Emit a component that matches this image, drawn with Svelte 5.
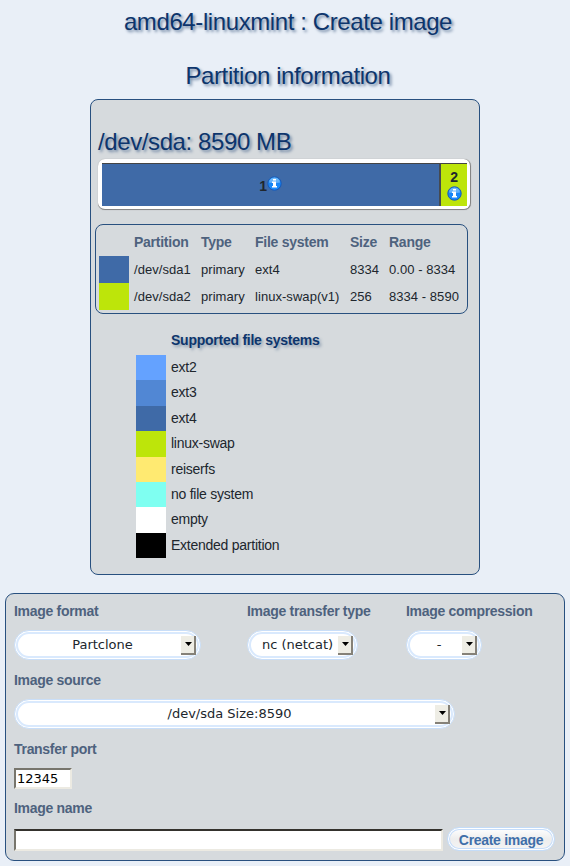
<script>
  const partitions = [
    { color: '#3f6aa7', name: '/dev/sda1', type: 'primary', fs: 'ext4', size: '8334', range: '0.00 - 8334' },
    { color: '#bde50a', name: '/dev/sda2', type: 'primary', fs: 'linux-swap(v1)', size: '256', range: '8334 - 8590' }
  ];
  const systems = [
    ['ext2', '#64a2ff'],
    ['ext3', '#5187d4'],
    ['ext4', '#3f6aa7'],
    ['linux-swap', '#bde50a'],
    ['reiserfs', '#ffea71'],
    ['no file system', '#7ffff1'],
    ['empty', '#ffffff'],
    ['Extended partition', '#000000']
  ];
  let port = $state('12345');
  let imageName = $state('');
</script>

{#snippet info()}
  <svg class="info" width="15" height="15" viewBox="0 0 15 15">
    <defs>
      <linearGradient id="ball" x1="0" y1="0" x2="0" y2="1">
        <stop offset="0" stop-color="#5bb4fa" />
        <stop offset="0.5" stop-color="#1785f5" />
        <stop offset="1" stop-color="#1b8cff" />
      </linearGradient>
    </defs>
    <circle cx="7.5" cy="7.5" r="6.7" fill="url(#ball)" stroke="#1558b8" stroke-width="1" />
    <path d="M2 6.500a5.600 5.600 0 0 1 11 0q-5.500 1.500-11 0z" fill="#b5dcff" opacity="0.4" />
    <path d="M6 3h3v1.500h-3zM5 5.500h4v4.500h1v1.500h-5v-1.500h1v-3h-1z" fill="#fff" />
  </svg>
{/snippet}

{#snippet dropdown(text, width)}
  <div class="select" style="width:{width}px">
    <span>{text}</span>
    <i class="arrow"><svg width="7" height="4" viewBox="0 0 7 4"><path d="M0 0h7L3.500 4z" /></svg></i>
  </div>
{/snippet}

<main>
  <h1>amd64-linuxmint : Create image</h1>
  <h1 class="second">Partition information</h1>

  <section class="disk">
    <h2>/dev/sda: 8590 MB</h2>
    <div class="bar">
      <div class="part first"><b>1</b>{@render info()}</div>
      <div class="part swap"><b>2</b>{@render info()}</div>
    </div>

    <div class="table">
      <div class="row head">
        <span></span><span>Partition</span><span>Type</span><span>File system</span><span>Size</span><span>Range</span>
      </div>
      {#each partitions as p}
        <div class="row">
          <i style="background:{p.color}"></i><span>{p.name}</span><span>{p.type}</span><span>{p.fs}</span><span>{p.size}</span><span>{p.range}</span>
        </div>
      {/each}
    </div>

    <div class="legend">
      <h3>Supported file systems</h3>
      {#each systems as [name, color]}
        <div class="system"><i style="background:{color}"></i><span>{name}</span></div>
      {/each}
    </div>
  </section>

  <section class="form">
    <div class="options">
      <div class="c1"><div class="label">Image format</div>{@render dropdown('Partclone', 187)}</div>
      <div class="c2"><div class="label">Image transfer type</div>{@render dropdown('nc (netcat)', 111)}</div>
      <div><div class="label">Image compression</div>{@render dropdown('-', 76)}</div>
    </div>
    <div class="label">Image source</div>
    {@render dropdown('/dev/sda Size:8590', 441)}
    <label class="label" for="port">Transfer port</label>
    <input id="port" class="port" bind:value={port} />
    <label class="label" for="name">Image name</label>
    <div class="submit">
      <input id="name" class="name" bind:value={imageName} />
      <button>Create image</button>
    </div>
  </section>
</main>

<style>
  :global(body) { background: #e9eff7; }
  main {
    box-sizing: border-box;
    height: 866px;
    overflow: hidden;
    font: 14px "Liberation Sans", Arial, sans-serif;
    letter-spacing: -0.25px;
    color: #20262d;
    background: #e9eff7;
  }
  main * { box-sizing: border-box; }
  h1, h2 {
    margin: 0;
    font-size: 24px;
    font-weight: normal;
    line-height: 28px;
    letter-spacing: -0.4px;
    color: #0d356c;
    text-shadow: 2px 2px 3px #7187a4;
    white-space: nowrap;
  }
  h1 { padding: 8px 0 0 6px; text-align: center; }
  .second { padding-top: 26px; }
  .disk {
    width: 390px;
    height: 476px;
    margin: 9px 0 0 90px;
    padding: 28px 0 0 4px;
    border: 1px solid #28507f;
    border-radius: 8px;
    background: #d6dadd;
  }
  h2 { padding-left: 3px; }
  .bar {
    display: flex;
    width: 373px;
    height: 51px;
    margin: 3px 0 0 3px;
    padding: 4px 3px 3px 4px;
    border-radius: 7px;
    border: solid #858585;
    border-width: 0 1px 1px 0;
    background: #fff;
    box-shadow: 0 0 1px #999;
  }
  .part { height: 43px; border-top: 1px solid #444; }
  .first {
    display: flex;
    flex: 1;
    justify-content: center;
    padding-top: 12px;
    border-right: 2px solid #454a52;
    background: #3f6aa7;
  }
  b { font: bold 14px/21px "Liberation Sans", Arial, sans-serif; }
  .info { display: block; }
  .swap {
    display: flex;
    width: 26px;
    flex-direction: column;
    align-items: center;
    padding-top: 4px;
    background: #bde50a;
  }
  .swap b { line-height: 18px; }
  .table {
    width: 373px;
    height: 90px;
    margin-top: 14px;
    padding: 4px 0 0 3px;
    border: 1px solid #28507f;
    border-radius: 8px;
  }
  .row {
    display: grid;
    grid-template-columns: 35px 67px 54px 95px 39px 75px;
    height: 27px;
    line-height: 27px;
    font-size: 13px;
    letter-spacing: 0.05px;
    white-space: nowrap;
  }
  .head { font-size: 14px; font-weight: bold; letter-spacing: -0.25px; color: #4e627e; }
  .row i { width: 30px; }
  .legend { margin: 14px 0 0 41px; }
  h3 {
    height: 27px;
    margin: 0;
    padding-left: 35px;
    font-size: 14px;
    line-height: 25px;
    color: #0d356c;
    text-shadow: 2px 2px 3px #8c9caf;
  }
  .system { display: flex; gap: 5px; height: 25.375px; line-height: 25px; }
  .system i { width: 30px; }
  .form {
    width: 560px;
    height: 268px;
    margin: 18px 0 0 5px;
    padding: 7px 8px 0;
    border: 1px solid #28507f;
    border-radius: 9px;
    background: #d6dadd;
  }
  .options { display: flex; }
  .c1 { width: 233px; }
  .c2 { width: 159px; }
  .label {
    display: block;
    height: 29px;
    line-height: 20px;
    letter-spacing: -0.3px;
    font-weight: bold;
    color: #4e627e;
    white-space: nowrap;
  }
  .select {
    display: flex;
    align-items: center;
    height: 30px;
    margin-bottom: 10px;
    padding: 0 4px 0 9px;
    border: 1px solid #c9def8;
    border-radius: 15px;
    background: #fff;
    box-shadow: inset 0 0 0 1px #fff, inset 0 0 0 3px #d9e9fd;
    font: 13px/28px "DejaVu Sans", sans-serif;
    letter-spacing: 0;
  }
  .select span { flex: 1; height: 29px; text-align: center; white-space: nowrap; }
  .arrow {
    display: flex;
    width: 15px;
    height: 19px;
    align-items: center;
    justify-content: center;
    padding-left: 1px;
    border: solid #858178;
    border-width: 0 2px 2px 0;
    background: #eeede5;
  }
  .arrow svg { display: block; }
  input {
    display: block;
    height: 21px;
    margin: 0;
    padding: 0 1px;
    border: 2px solid;
    border-color: #77756c #eceae2 #eceae2 #77756c;
    border-radius: 0;
    outline: 0;
    background: #fff;
    color: #000;
    font: 13px "DejaVu Sans", sans-serif;
  }
  .port { width: 58px; margin-bottom: 9px; }
  .name { width: 429px; height: 22px; margin-top: 2px; border-color: #34322d #eceae2 #eceae2 #77756c; }
  .submit { display: flex; gap: 4px; }
  button {
    width: 108px;
    height: 24px;
    padding: 0;
    border: 1px solid #c4dcf8;
    border-radius: 12px;
    background: linear-gradient(#fff, #eee 50%, #f4f4f4);
    box-shadow: inset 0 0 0 1px #fff, inset 0 0 0 2px #c6ddfa;
    color: #3f6fa9;
    font: bold 14px/24px "Liberation Sans", Arial, sans-serif;
    letter-spacing: -0.3px;
  }
</style>
